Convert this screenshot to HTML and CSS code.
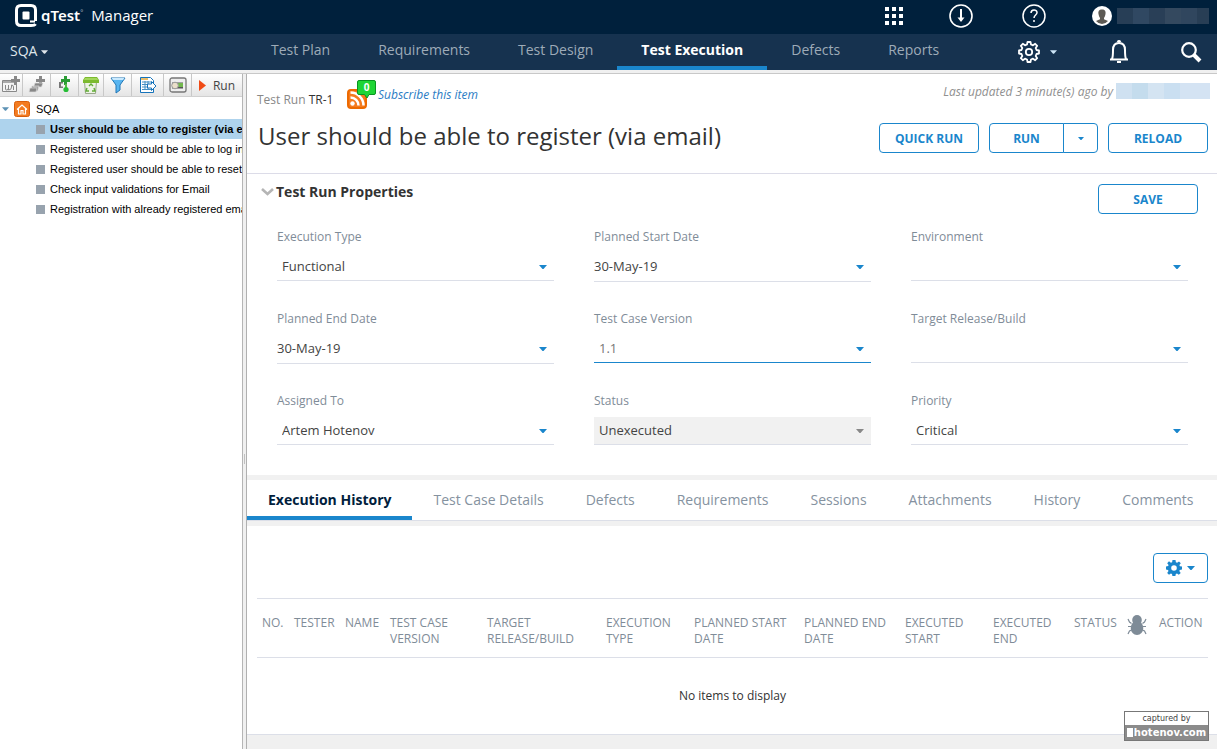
FILE: index.html
```html
<!DOCTYPE html>
<html lang="en">
<head>
<meta charset="utf-8">
<meta name="viewport" content="width=device-width, initial-scale=1">
<title>qTest Manager - Test Execution</title>
<link rel="stylesheet" href="styles.css">
</head>
<body>
<svg class="defs" aria-hidden="true">
  <symbol id="caret" viewBox="0 0 8 4"><path d="M0 0h8L4.500 4h-1z"/></symbol>
  <symbol id="tree-square" viewBox="0 0 9 9"><path d="M0 0h9v9H0z"/></symbol>
</svg>
<div class="page">
  <header class="topbar">
    <a class="brand" href="#">
      <svg width="22" height="23" viewBox="0 0 22 23" fill="none" stroke="#fff" stroke-width="3"><path d="M20.500 17V6Q20.500 1.500 16 1.500H6Q1.500 1.500 1.500 6v11q0 4.500 4.500 4.500h10q3.500 0 4.500-1.500"/><path d="M15 17.500h5" stroke-width="2"/><rect x="7.500" y="7.500" width="7" height="8" rx="1" fill="#fff" stroke="none"/></svg>
      <span class="brand-q">qTest<sup>&#176;</sup></span>
      <span class="brand-product">Manager</span>
    </a>
    <div class="top-actions">
      <button type="button" aria-label="Apps"><svg width="18" height="18" viewBox="0 0 18 18"><path d="M0 0h4v4H0zM7 0h4v4H7zM14 0h4v4h-4zM0 7h4v4H0zM7 7h4v4H7zM14 7h4v4h-4zM0 14h4v4H0zM7 14h4v4H7zM14 14h4v4h-4z"/></svg></button>
      <button type="button" aria-label="Downloads"><svg width="24" height="24" viewBox="0 0 24 24" fill="none" stroke="#fff" stroke-width="1.600"><circle cx="12" cy="12" r="11"/><path d="M12 5v12" stroke-width="2"/><path d="M8.500 13.500h7L12 18z" fill="#fff" stroke="none"/></svg></button>
      <button type="button" aria-label="Help"><svg width="24" height="24" viewBox="0 0 24 24" fill="none" stroke="#fff" stroke-width="1.500"><circle cx="12" cy="12" r="11"/><path d="M9 9c0-4 6-4 6-.5 0 2.500-3 2.500-3 5.500M12 16v2"/></svg></button>
      <button type="button" class="user" aria-label="User account"><svg width="20" height="20" viewBox="0 0 20 20"><circle cx="10" cy="10" r="10" fill="#fff"/><path d="M10 3.500c-3 0-4 2-3.500 4.500.3 2 1 3 1.500 4v1.200L4 15q2.500 3 6 3t6-3l-4-1.800V12c.5-1 1.200-2 1.500-4 .5-2.500-.5-4.500-3.500-4.500z" fill="#5d5a54"/></svg><span class="user-name"></span></button>
    </div>
  </header>
  <div class="navbar">
    <button type="button" class="project">SQA <svg width="7" height="4"><use href="#caret"/></svg></button>
    <nav class="nav">
      <a href="#">Test Plan</a><a href="#">Requirements</a><a href="#">Test Design</a><a href="#" class="active" aria-current="page">Test Execution</a><a href="#">Defects</a><a href="#">Reports</a>
    </nav>
    <div class="nav-actions">
      <button type="button" class="settings" aria-label="Settings"><svg width="22" height="22" viewBox="0 0 22 22" fill="none" stroke="#fff" stroke-width="1.800" stroke-linejoin="round"><path d="M9.500 1h3l.5 2.500 2 .8 2.200-1.500 2 2-1.500 2.200.8 2 2.500.5v3l-2.500.5-.8 2 1.500 2.200-2 2-2.200-1.500-2 .8-.5 2.500h-3L9 18.500l-2-.8-2.200 1.500-2-2L4.300 15l-.8-2L1 12.500v-3L3.500 9l.8-2-1.500-2.200 2-2L7 4.300l2-.8z"/><circle cx="11" cy="11" r="3.200"/></svg><svg width="7" height="4"><use href="#caret"/></svg></button>
      <button type="button" aria-label="Notifications"><svg width="20" height="24" viewBox="0 0 20 24" fill="none" stroke="#fff" stroke-width="2"><path d="M1 19.500h18M3 19c1-2 1-5 1-9 0-4 2-7 6-7s6 3 6 7c0 4 0 7 1 9"/><path d="M8.500 2Q10 0 11.500 2M8 22h4" /></svg></button>
      <button type="button" aria-label="Search"><svg width="21" height="21" viewBox="0 0 21 21" fill="none" stroke="#fff"><circle cx="8" cy="8" r="6.800" stroke-width="2.200"/><path d="M13 13l6 6" stroke-width="4"/></svg></button>
    </div>
  </div>

  <div class="workspace">
    <aside class="sidebar">
      <div class="toolbar" role="toolbar" aria-label="Tree tools">
        <button type="button" class="w22" aria-label="New cycle"><svg width="18" height="18" viewBox="0 0 18 18" fill="none"><path d="M.5 4.500h14v11H.5z" fill="#f4f4f4" stroke="#888"/><path d="M1 5h14v2H1z" fill="#aaa"/><path d="M3.500 9v4q0 1 1 1 2 0 2-2v-3M6.500 9v5q3 0 3-3v-2q2 0 2 2v3" stroke="#888"/><path d="M12 0h3v3h3v3h-3v3h-3V6H9V3h3z" fill="#888"/></svg></button>
        <button type="button" class="grey" aria-label="New suite"><svg width="18" height="18" viewBox="0 0 18 18"><path d="M11 0h3v3h3v3h-3v2h-3V6H8V3h3z"/><path d="M7 7h8l-1.500 4H5.500zM4 10h7l-1.500 5H3z" stroke="#ddd" stroke-width=".7"/><path d="M2 12h7l-1 4H1z" stroke="#ddd" stroke-width=".7"/></svg></button>
        <button type="button" aria-label="New test run"><svg width="18" height="18" viewBox="0 0 18 18"><path d="M7 6H3v6h4v-1.500H5v-3h2z" fill="#777"/><path d="M8 0h3v3h3v3h-3v3H8V6H5V3h3z" fill="#2b9c35"/><path d="M9 8h2v4H9z" fill="#58b947"/><circle cx="10" cy="13.500" r="2.600" fill="#25bd35"/></svg></button>
        <button type="button" class="w25" aria-label="Delete"><svg width="18" height="18" viewBox="0 0 18 18"><path d="M2.500 5.500h12l-1 12h-10z" fill="#edf3e5" stroke="#99a78b"/><path d="M3 1h12l2 3v3H1V4z" fill="#7cba2f"/><path d="M3 2h12l1 2H2z" fill="#a3d75b"/><path d="M7 10l2-2 2 2M12 12l1 3h-3M7 15H4l1-3" fill="none" stroke="#62ad35" stroke-width="1.400"/></svg></button>
        <button type="button" aria-label="Filter"><svg width="18" height="18" viewBox="0 0 18 18"><path d="M2 2h14l-5 7v5l-4 3V9z" fill="#58b5f0" stroke="#2277b5"/><path d="M2.500 2h13L14 4H4z" fill="#c9eaff"/></svg></button>
        <button type="button" class="w32" aria-label="Export"><svg width="18" height="18" viewBox="0 0 18 18" fill="none"><path d="M1.500 1.500h10l3 3v12h-13z" fill="#fff" stroke="#1673ba"/><path d="M2 2h7v2H2z" fill="#e9bd6a"/><path d="M3 6h9M3 8.500h8M3 11h8M3 13.500h9M6 5v9M9 5v9" stroke="#4590c4"/><path d="M8.500 8h4V5.500L17 10l-4.500 4.500V12h-4z" fill="#fff" stroke="#1673ba"/></svg></button>
        <button type="button" aria-label="Toggle view"><svg width="18" height="18" viewBox="0 0 18 18"><rect x="1" y="2" width="16" height="14" rx="2" fill="#eee" stroke="#777" stroke-width="1.300"/><path d="M3 6.500h11v6H3z" fill="#555"/><path d="M9 7h5v4H9z" fill="#73b84e"/><circle cx="6" cy="9.500" r="3.300" fill="#eadfca" stroke="#999"/></svg></button>
        <button type="button" class="run-tool"><svg width="7" height="11" viewBox="0 0 7 11"><path d="M0 0l7 5.500L0 11z" fill="#f04b16"/></svg>Run</button>
      </div>
      <ul class="tree">
        <li class="root"><svg class="twist" width="7" height="4"><use href="#caret"/></svg><svg width="16" height="16" viewBox="0 0 16 16"><rect x=".5" y=".5" width="15" height="15" rx="2" fill="#f37b20" stroke="#d95e0b"/><path d="M3 8.500L8 4l5 4.500M4.500 7.500V13H7V9.500h2V13h2.500V7.500" fill="none" stroke="#fff" stroke-width="1.200"/></svg><a href="#">SQA</a></li>
        <li class="selected"><svg width="9" height="9"><use href="#tree-square"/></svg><a href="#">User should be able to register (via email)</a></li>
        <li><svg width="9" height="9"><use href="#tree-square"/></svg><a href="#">Registered user should be able to log in</a></li>
        <li><svg width="9" height="9"><use href="#tree-square"/></svg><a href="#">Registered user should be able to reset password</a></li>
        <li><svg width="9" height="9"><use href="#tree-square"/></svg><a href="#">Check input validations for Email</a></li>
        <li><svg width="9" height="9"><use href="#tree-square"/></svg><a href="#">Registration with already registered email</a></li>
      </ul>
    </aside>
    <div class="splitter" role="separator" aria-orientation="vertical"><span></span></div>
    <main class="main">
      <section class="run-head">
        <div class="meta">
          <span class="run-id">Test Run <b>TR-1</b></span>
          <a class="subscribe" href="#">
            <svg width="29" height="31" viewBox="0 0 29 31"><rect x="1" y="10" width="18" height="18" rx="3" fill="#f47b20" stroke="#ed6a00" stroke-width="2"/><circle cx="5.500" cy="23.500" r="2.200" fill="#fff"/><path d="M3.500 17.500a8 8 0 0 1 8 8M3.500 12.500a13 13 0 0 1 13 13" fill="none" stroke="#fff" stroke-width="2.500"/><path d="M12 .5h15q1.500 0 1.500 1.500v11q0 1.500-1.500 1.500h-5L20 18l-2.500-3.500H12q-1.500 0-1.500-1.500V2Q10.500.5 12 .5z" fill="#1fd535" stroke="#0a9420"/><text class="badge-text" x="19.500" y="11" text-anchor="middle">0</text></svg>
            <span>Subscribe this item</span>
          </a>
          <span class="updated">Last updated 3 minute(s) ago by <span class="updated-by"></span></span>
        </div>
        <div class="title-row">
          <h1>User should be able to register (via email)</h1>
          <div class="buttons">
            <button type="button" class="btn">QUICK RUN</button>
            <div class="split"><button type="button" class="btn">RUN</button><button type="button" class="btn drop" aria-label="More run options"><svg width="6" height="3"><use href="#caret"/></svg></button></div>
            <button type="button" class="btn">RELOAD</button>
          </div>
        </div>
      </section>

      <section class="props">
        <div class="props-head">
          <h2><svg width="13" height="8" viewBox="0 0 13 8"><path d="M1 1l5.500 5L12 1" fill="none" stroke="#b5b5b5" stroke-width="2.600"/></svg>Test Run Properties</h2>
          <button type="button" class="btn">SAVE</button>
        </div>
        <div class="fields">
          <div class="field"><label for="f1">Execution Type</label><div class="control"><select id="f1"><option>Functional</option></select><svg width="8" height="4"><use href="#caret"/></svg></div></div>
          <div class="field"><label for="f2">Planned Start Date</label><div class="control date"><input id="f2" type="text" value="30-May-19"><svg width="8" height="4"><use href="#caret"/></svg></div></div>
          <div class="field"><label for="f3">Environment</label><div class="control"><select id="f3"><option></option></select><svg width="8" height="4"><use href="#caret"/></svg></div></div>
          <div class="field"><label for="f4">Planned End Date</label><div class="control date"><input id="f4" type="text" value="30-May-19"><svg width="8" height="4"><use href="#caret"/></svg></div></div>
          <div class="field"><label for="f5">Test Case Version</label><div class="control current"><select id="f5"><option>1.1</option></select><svg width="8" height="4"><use href="#caret"/></svg></div></div>
          <div class="field"><label for="f6">Target Release/Build</label><div class="control"><select id="f6"><option></option></select><svg width="8" height="4"><use href="#caret"/></svg></div></div>
          <div class="field"><label for="f7">Assigned To</label><div class="control"><select id="f7"><option>Artem Hotenov</option></select><svg width="8" height="4"><use href="#caret"/></svg></div></div>
          <div class="field"><label for="f8">Status</label><div class="control locked"><select id="f8" disabled><option>Unexecuted</option></select><svg width="8" height="4"><use href="#caret"/></svg></div></div>
          <div class="field"><label for="f9">Priority</label><div class="control"><select id="f9"><option>Critical</option></select><svg width="8" height="4"><use href="#caret"/></svg></div></div>
        </div>
      </section>

      <nav class="tabs" aria-label="Test run details">
        <a href="#" class="active">Execution History</a><a href="#">Test Case Details</a><a href="#">Defects</a><a href="#">Requirements</a><a href="#">Sessions</a><a href="#">Attachments</a><a href="#">History</a><a href="#">Comments</a>
      </nav>

      <section class="history">
        <button type="button" class="btn gear" aria-label="Table settings"><svg width="16" height="16" viewBox="0 0 16 16"><path fill-rule="evenodd" d="M6.500 0h3l.4 2.200 1.200.5L13 1.400 14.800 3.200 13.400 5l.5 1.200 2.100.4v3l-2.200.4-.5 1.100 1.400 1.900-1.900 1.800-1.800-1.300-1.200.5-.4 2h-3l-.4-2-1.100-.5L3 14.800 1.200 13l1.300-1.900L2 9.900l-2-.4v-3l2.100-.4L2.600 5 1.200 3.200 3 1.300l1.900 1.400L6.100 2.200zM8 5.200A2.800 2.800 0 1 0 8 10.800 2.800 2.800 0 0 0 8 5.200z"/></svg><svg width="8" height="4"><use href="#caret"/></svg></button>
        <table>
          <colgroup><col class="c-no"><col class="c-tester"><col class="c-name"><col class="c-version"><col class="c-target"><col class="c-type"><col class="c-pstart"><col class="c-pend"><col class="c-estart"><col class="c-eend"><col class="c-status"><col class="c-bug"><col class="c-action"></colgroup>
          <thead><tr><th>NO.</th><th>TESTER</th><th>NAME</th><th>TEST CASE VERSION</th><th>TARGET RELEASE/BUILD</th><th>EXECUTION TYPE</th><th>PLANNED START DATE</th><th>PLANNED END DATE</th><th>EXECUTED START</th><th>EXECUTED END</th><th>STATUS</th><th><svg width="20" height="20" viewBox="0 0 20 20" role="img" aria-label="Defects"><g fill="#7e8b97"><ellipse cx="10" cy="5" rx="4.800" ry="5"/><ellipse cx="10" cy="13" rx="6.300" ry="7"/></g><path d="M4.500 8.500L2.500 7 1 4M15.500 8.500l2-1.500L19 4M4 11.500H1M16 11.500h3M4.500 15l-2 1L1 19M15.500 15l2 1 1.500 3" fill="none" stroke="#7e8b97" stroke-width="1.200"/></svg></th><th>ACTION</th></tr></thead>
          <tbody><tr><td colspan="13">No items to display</td></tr></tbody>
        </table>
      </section>
    </main>
  </div>
  <div class="stamp"><span class="stamp-top">captured by</span><span class="stamp-site"><i></i>hotenov.com</span></div>
</div>
</body>
</html>
```

FILE: styles.css
```css
* { box-sizing: border-box; }
body { margin: 0; font-family: "Open Sans", sans-serif; font-size: 13px; color: #333; background: #f0f0f0; }
a { color: inherit; text-decoration: none; }
button { font: inherit; color: inherit; background: none; border: 0; padding: 0; cursor: pointer; }
svg { display: block; flex: none; fill: currentColor; }
svg[fill="none"] { fill: none; }
h1, h2 { margin: 0; }
.defs { position: absolute; width: 0; height: 0; }
.page { position: relative; min-height: 100vh; display: flex; flex-direction: column; }

.topbar { display: flex; justify-content: space-between; height: 34px; padding: 0 8px 0 15px; background: #00203c; color: #fff; }
.brand { display: flex; align-items: center; height: 30px; }
.brand-q { margin-left: 4px; font: 600 15px/22px "Noto Sans", sans-serif; }
.brand-q sup { font-size: 7px; line-height: 0; color: #8292a2; }
.brand-product { margin-left: 8px; font-size: 15px; line-height: 22px; }
.top-actions { display: flex; align-items: center; gap: 49px; height: 32px; }
.top-actions button:first-child { margin-right: -3px; }
.top-actions .user { display: flex; align-items: center; gap: 5px; margin-left: -3px; }
.user-name { width: 92px; height: 16px; background: linear-gradient(90deg, #273e56 0 16px, #304862 16px 32px, #293f57 32px 48px, #34495f 48px 64px, #30465e 64px 80px, #283e55 80px); }

.navbar { display: flex; height: 36px; background: #16324f; color: #9eabb8; font-size: 14px; }
.project { display: flex; align-items: center; gap: 4px; width: 247px; padding: 0 0 4px 10px; color: #dfe5ea; }
.project svg { margin-top: 3px; }
.nav { display: flex; }
.nav a { padding: 6px 24px 0; line-height: 20px; border-bottom: 4px solid transparent; }
.nav .active { color: #fff; font-weight: 700; border-color: #1a86cc; }
.nav-actions { display: flex; align-items: center; margin-left: auto; padding-right: 15px; color: #cde5f7; gap: 52px; }
.settings { display: flex; align-items: center; gap: 10px; }

.workspace { display: flex; flex: 1; margin-top: 3px; border-top: 1px solid #c8c8c8; }
.sidebar { width: 243px; flex: none; overflow: hidden; background: #fff; border-right: 1px solid #b5b5b5; font: 11px/20px "Liberation Sans", Arial, sans-serif; color: #000; }
.toolbar { display: flex; height: 23px; border-bottom: 1px solid #d0d0d0; background: linear-gradient(#fff, #e5e5e5); }
.toolbar button { display: flex; align-items: center; justify-content: center; width: 28px; border-right: 1px solid #c8c8c8; }
.toolbar .w22 { width: 23px; }
.toolbar .w25 { width: 25px; }
.toolbar .w32 { width: 32px; }
.toolbar .grey { color: #888; }
.toolbar .run-tool { flex: 1; gap: 7px; border: 0; font: 12px "Open Sans", sans-serif; color: #444; }
.tree { list-style: none; margin: 0; padding: 2px 0 0; }
.tree li { display: flex; align-items: center; gap: 5px; height: 20px; padding-left: 36px; white-space: nowrap; color: #98a3ae; }
.tree a { color: #000; }
.tree .root { padding-left: 2px; gap: 6px; }
.tree .root svg + svg { margin-left: -1px; }
.tree .twist { color: #5d92b5; }
.tree .selected { background: #aed3ed; font-weight: 700; }
.splitter { width: 4px; flex: none; display: flex; align-items: center; background: #f0f0f0; border-right: 1px solid #b0b0b0; }
.splitter span { width: 1px; height: 10px; margin: 94px 0 0 1px; background: #c0c0c0; }
.main { flex: 1; min-width: 0; }

.run-head { padding: 6px 9px 20px 10px; background: #fff; border-bottom: 1px solid #dcdce8; }
.meta { display: flex; height: 36px; font-size: 12px; line-height: 16px; }
.run-id { margin-top: 12px; width: 90px; color: #888; }
.run-id b { font-weight: 400; color: #333; }
.subscribe { display: flex; gap: 2px; color: #2a7cc4; font-style: italic; }
.subscribe span { margin-top: 7px; }
.badge-text { font: 700 10px "Open Sans", sans-serif; fill: #fff; }
.updated { display: flex; gap: 3px; margin-left: auto; height: 16px; margin-top: 3px; margin-right: -2px; color: #909090; font-style: italic; line-height: 18px; }
.updated-by { width: 94px; height: 16px; background: linear-gradient(90deg, #cfe1f1 0 16px, #c4dced 16px 32px, #d4e4f2 32px 48px, #cadff1 48px 64px, #d4e3f3 64px); }
.title-row { display: flex; justify-content: space-between; align-items: flex-end; height: 37px; }
h1 { align-self: flex-start; margin-left: 1px; font-size: 24px; line-height: 40px; font-weight: 400; white-space: nowrap; }
.buttons { display: flex; gap: 10px; }
.btn { display: flex; align-items: center; justify-content: center; width: 100px; height: 30px; border: 1px solid #1a86cc; border-radius: 4px; background: #fff; color: #1a86cc; font-size: 12px; font-weight: 700; }
.split { display: flex; }
.split .btn { width: 75px; border-radius: 4px 0 0 4px; }
.split .drop { width: 35px; margin-left: -1px; border-radius: 0 4px 4px 0; }

.props { padding: 10px 19px 29px 14px; background: #fff; }
.props-head { display: flex; align-items: flex-start; justify-content: space-between; }
.props-head h2 { display: flex; align-items: center; gap: 2px; font-size: 14px; line-height: 16px; }
.fields { display: grid; grid-template-columns: repeat(3, 1fr); gap: 28px 40px; margin-top: 14px; padding: 0 10px 0 16px; }
.field { height: 54px; }
.field label { display: block; height: 18px; margin-bottom: 7px; font-size: 12px; line-height: 18px; color: #7f8c98; }
.control { display: grid; align-items: center; height: 28px; border-bottom: 1px solid #dcdfe8; color: #1a86cc; }
.control > * { grid-area: 1 / 1; }
.control svg { justify-self: end; margin-right: 7px; pointer-events: none; }
.control select, .control input { width: 100%; height: 27px; padding: 0 20px 2px 5px; border: 0; background: none; appearance: none; font: 13px "Open Sans", sans-serif; color: #444; opacity: 1; outline: 0; }
.control.date { height: 29px; }
.control input { padding-left: 0; }
.control.current { border-color: #1a86cc; }
.control.current select { color: #777; }
.control.locked { background: #f1f1f1; color: #888; }

.tabs { display: flex; height: 51px; border-top: 5px solid #f1f1f1; border-bottom: 5px solid #f1f1f1; background: #fff; box-shadow: inset 0 -1px #dcdfe8; font-size: 14px; color: #8592a0; }
.tabs a { padding: 10px 21px 0; line-height: 20px; white-space: nowrap; }
.tabs .active { height: 40px; border-bottom: 4px solid #1a86cc; color: #00203c; font-weight: 700; }

.history { padding: 27px 9px 0 10px; background: #fff; border-bottom: 1px solid #dcdfe8; }
.gear { width: 55px; gap: 5px; margin-left: auto; }
table { width: 100%; margin-top: 15px; border-collapse: collapse; table-layout: fixed; font-size: 12px; line-height: 16px; }
thead tr { border-top: 1px solid #dcdfe8; border-bottom: 1px solid #dcdfe8; }
th { height: 59px; padding: 16px 0 0 5px; text-align: left; vertical-align: top; font-weight: 400; color: #7f8c98; }
td { height: 76px; padding: 0; text-align: center; color: #333; }
.c-no, .c-bug { width: 32px; }
.c-tester { width: 51px; }
.c-name { width: 45px; }
.c-version { width: 97px; }
.c-target { width: 119px; }
.c-type, .c-estart { width: 88px; }
.c-pstart { width: 110px; }
.c-pend { width: 101px; }
.c-eend { width: 81px; }
.c-status { width: 53px; }
.c-action { width: 54px; }

.stamp { position: absolute; right: 8px; bottom: 8px; width: 85px; border: 1px solid #777; background: #fff; text-align: center; font: 8px/13px "DejaVu Sans", sans-serif; color: #444; }
.stamp span { display: block; }
.stamp .stamp-site { display: flex; align-items: center; justify-content: center; gap: 1px; background: #8b8b8b; color: #fff; font-size: 10px; font-weight: 700; line-height: 15px; }
.stamp i { width: 6px; height: 9px; background: #fff; }
```
